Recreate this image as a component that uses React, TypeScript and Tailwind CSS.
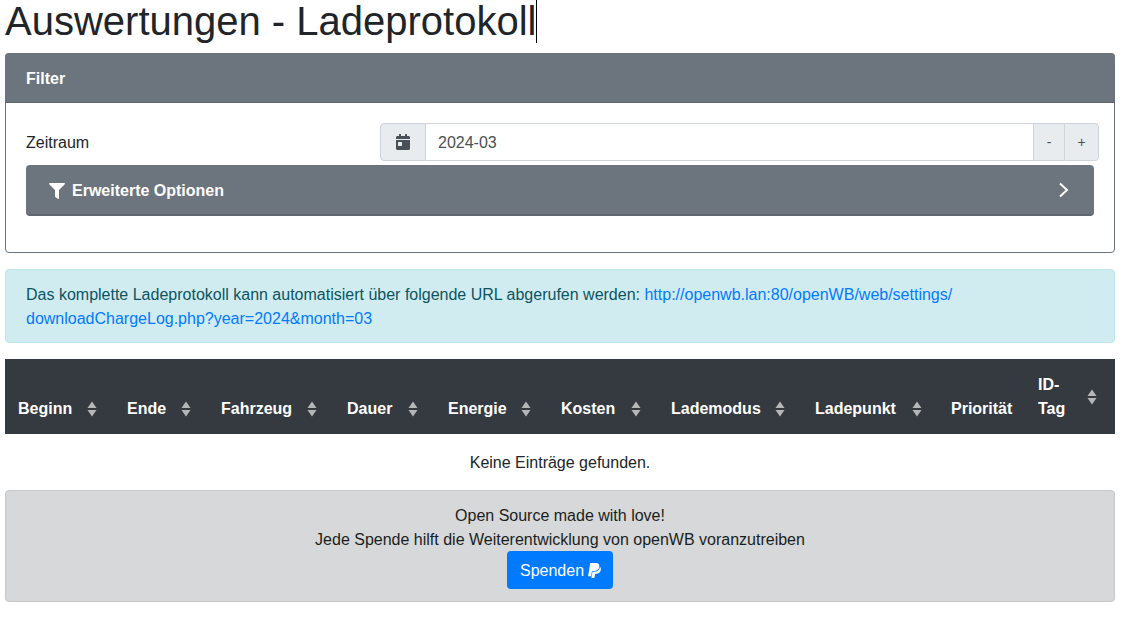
import { FaCalendarDay, FaFilter, FaPaypal } from "react-icons/fa";

const cols: [string, number, boolean, string][] = [
  ["Beginn", 110, true, "pl-[13px] pr-[18px]"],
  ["Ende", 94, true, "pl-[12px] pr-[18px]"],
  ["Fahrzeug", 126, true, "pl-[12px] pr-[18px]"],
  ["Dauer", 101, true, "pl-[12px] pr-[18px]"],
  ["Energie", 113, true, "pl-[12px] pr-[18px]"],
  ["Kosten", 110, true, "pl-[12px] pr-[18px]"],
  ["Lademodus", 144, true, "pl-[12px] pr-[18px]"],
  ["Ladepunkt", 136, true, "pl-[12px] pr-[17px]"],
  ["Priorität", 87, false, "pl-[12px] pr-[18px]"],
  ["ID-Tag", 89, true, "pl-[12px] pr-[18px]"],
];

function SortIcon() {
  return (
    <svg width="10" height="16" viewBox="0 0 10 16" className="shrink-0">
      <path d="M5 0.5 L9.5 7 L0.5 7 Z" fill="#b4b6b8" />
      <path d="M5 15.5 L9.5 9 L0.5 9 Z" fill="#b4b6b8" />
    </svg>
  );
}

export default function App() {
  return (
    <div className="w-[1134px] h-[628px] overflow-hidden bg-white font-['Liberation_Sans',Arial,sans-serif] text-base leading-6 text-[#212529] pl-[5px] pr-[19px]">
      <h1 className="relative h-[53px] text-[40px] leading-[42px] font-normal w-fit pr-[1px]">
        Auswertungen - Ladeprotokoll
        <span className="absolute right-0 top-0 h-[43px] w-px bg-black" />
      </h1>

      <section className="h-[200px] rounded border border-[#6c757d] mb-4">
        <div className="h-[50px] -mx-px -mt-px pt-[2px] bg-[#6c757d] border-b border-[#5f666d] rounded-t px-[21px] flex items-center font-bold text-white">
          Filter
        </div>
        <div className="px-5 pt-5">
          <div className="flex items-center h-[38px] mb-1">
            <label className="w-[354px] shrink-0 pt-px">Zeitraum</label>
            <div className="flex w-[719px] h-[38px] shrink-0 text-[#495057]">
              <span className="w-[46px] flex items-center justify-center bg-[#e9ecef] border border-[#ced4da] rounded-l">
                <FaCalendarDay size={16} />
              </span>
              <span className="flex-1 flex items-center px-3 pt-px border-y border-[#ced4da]">2024-03</span>
              <span className="w-[31px] flex items-center justify-center bg-[#e9ecef] border-l border-y border-[#ced4da] text-sm">-</span>
              <span className="w-[35px] flex items-center justify-center bg-[#e9ecef] border border-[#ced4da] rounded-r text-sm">+</span>
            </div>
          </div>
          <button className="w-full h-[51px] flex items-center justify-between bg-[#6c757d] border-b-2 border-[#5f666d] rounded pl-[23px] pr-[24px] font-bold text-white">
            <span className="flex items-center gap-[7px] pt-[2px]">
              <FaFilter size={16} />
              Erweiterte Optionen
            </span>
            <svg width="12" height="16" viewBox="0 0 12 16" fill="none" stroke="white" strokeWidth="2">
              <path d="M2 1.5 L9 8 L2 14.5" />
            </svg>
          </button>
        </div>
      </section>

      <div className="h-[74px] mb-4 rounded border border-[#bee5eb] bg-[#d1ecf1] text-[#0c5460] pt-[13px] pb-[11px] px-5">
        Das komplette Ladeprotokoll kann automatisiert über folgende URL abgerufen werden:{" "}
        <a className="text-[#007bff]" href="#">
          http://openwb.lan:80/openWB/web/settings/
          <br />
          downloadChargeLog.php?year=2024&amp;month=03
        </a>
      </div>

      <table className="w-[1110px] table-fixed border-collapse">
        <thead>
          <tr className="bg-[#343a40] text-white h-[75px]">
            {cols.map(([name, w, sort, pad]) => (
              <th key={name} style={{ width: w }} className={`align-bottom text-left font-bold pt-3 pb-[13px] ${pad}`}>
                <div className="flex items-center justify-between">
                  <span className="w-min">{name}</span>
                  {sort && <SortIcon />}
                </div>
              </th>
            ))}
          </tr>
        </thead>
      </table>

      <p className="h-[56px] pt-[17px] text-center">Keine Einträge gefunden.</p>

      <footer className="h-[112px] rounded border border-[#c6c8ca] bg-[#d6d8d9] text-[#1b1e21] pt-[13px] pb-[11px] text-center flex flex-col items-center">
        <div>Open Source made with love!</div>
        <div>Jede Spende hilft die Weiterentwicklung von openWB voranzutreiben</div>
        <button className="h-[38px] w-[106px] -mt-px rounded bg-[#007bff] text-white flex items-center justify-center gap-[2px] pt-px pl-[3px]">
          Spenden
          <FaPaypal size={17} />
        </button>
      </footer>
    </div>
  );
}
